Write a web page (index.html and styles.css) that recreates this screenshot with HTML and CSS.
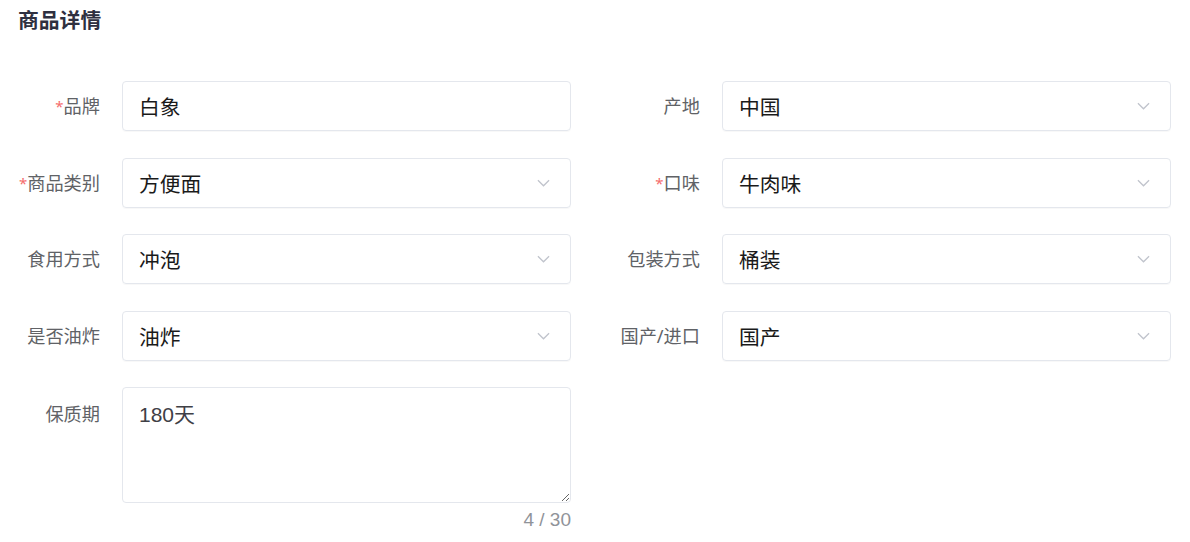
FILE: index.html
```html
<!DOCTYPE html>
<html lang="zh">
<head>
<meta charset="utf-8">
<link rel="stylesheet" href="styles.css">
</head>
<body>
<div class="page">
  <h2 class="title">商品详情</h2>
  <div class="form">
    <div class="item">
      <label class="label"><span class="req">*</span>品牌</label>
      <div class="control"><div class="input">白象</div></div>
    </div>
    <div class="item">
      <label class="label">产地</label>
      <div class="control"><div class="input select">中国<svg class="arrow" viewBox="0 0 14 8"><polyline points="1,1 7,7 13,1"/></svg></div></div>
    </div>
    <div class="item">
      <label class="label"><span class="req">*</span>商品类别</label>
      <div class="control"><div class="input select">方便面<svg class="arrow" viewBox="0 0 14 8"><polyline points="1,1 7,7 13,1"/></svg></div></div>
    </div>
    <div class="item">
      <label class="label"><span class="req">*</span>口味</label>
      <div class="control"><div class="input select">牛肉味<svg class="arrow" viewBox="0 0 14 8"><polyline points="1,1 7,7 13,1"/></svg></div></div>
    </div>
    <div class="item">
      <label class="label">食用方式</label>
      <div class="control"><div class="input select">冲泡<svg class="arrow" viewBox="0 0 14 8"><polyline points="1,1 7,7 13,1"/></svg></div></div>
    </div>
    <div class="item">
      <label class="label">包装方式</label>
      <div class="control"><div class="input select">桶装<svg class="arrow" viewBox="0 0 14 8"><polyline points="1,1 7,7 13,1"/></svg></div></div>
    </div>
    <div class="item">
      <label class="label">是否油炸</label>
      <div class="control"><div class="input select">油炸<svg class="arrow" viewBox="0 0 14 8"><polyline points="1,1 7,7 13,1"/></svg></div></div>
    </div>
    <div class="item">
      <label class="label">国产/进口</label>
      <div class="control"><div class="input select">国产<svg class="arrow" viewBox="0 0 14 8"><polyline points="1,1 7,7 13,1"/></svg></div></div>
    </div>
    <div class="item item-top">
      <label class="label label-top">保质期</label>
      <div class="control">
        <textarea class="textarea">180天</textarea>
        <div class="count">4 / 30</div>
      </div>
    </div>
  </div>
</div>
</body>
</html>
```
FILE: styles.css
```css
html, body {
  margin: 0;
  padding: 0;
  background: #ffffff;
}
body {
  font-family: "Noto Sans", "Noto Sans CJK SC", sans-serif;
}
.page {
  padding: 6px 19px 0 18px;
}
.title {
  margin: 0;
  font-size: 20.8px;
  line-height: 28px;
  font-weight: 700;
  color: #2f3040;
}
.form {
  margin-top: 47px;
  display: grid;
  grid-template-columns: 1fr 1fr;
  column-gap: 47px;
  row-gap: 26.5px;
}
.item {
  display: flex;
  align-items: center;
}
.item-top {
  align-items: flex-start;
}
.label {
  width: 104px;
  flex: none;
  box-sizing: border-box;
  padding-right: 22px;
  text-align: right;
  font-size: 18.2px;
  color: #606266;
  line-height: 26px;
  white-space: nowrap;
}
.label-top {
  padding-top: 14px;
}
.req {
  color: #f56c6c;
  font-size: 15px;
  vertical-align: 1px;
}
.control {
  flex: 1;
  min-width: 0;
}
.input {
  box-sizing: border-box;
  height: 50px;
  border: 1px solid #e4e7ed;
  border-radius: 4px;
  box-shadow: 0 1px 1px rgba(0, 0, 0, 0.03);
  padding: 0 18px 0 16px;
  display: flex;
  align-items: center;
  font-size: 20.8px;
  color: #1a1a1a;
}
.select {
  justify-content: space-between;
}
.arrow {
  width: 13px;
  height: 8px;
  fill: none;
  stroke: #c0c4cc;
  stroke-width: 1.4;
  margin-right: 2px;
}
.textarea {
  display: block;
  box-sizing: border-box;
  width: 100%;
  height: 116px;
  margin: 0;
  border: 1px solid #e4e7ed;
  border-radius: 4px;
  padding: 13px 16px;
  font-family: "Liberation Sans", "Noto Sans CJK SC", sans-serif;
  font-size: 21px;
  line-height: 28px;
  color: #3f4046;
  resize: vertical;
  outline: none;
}
.count {
  text-align: right;
  font-family: "Liberation Sans", "Noto Sans CJK SC", sans-serif;
  font-size: 19px;
  line-height: 34px;
  color: #909399;
}
```
